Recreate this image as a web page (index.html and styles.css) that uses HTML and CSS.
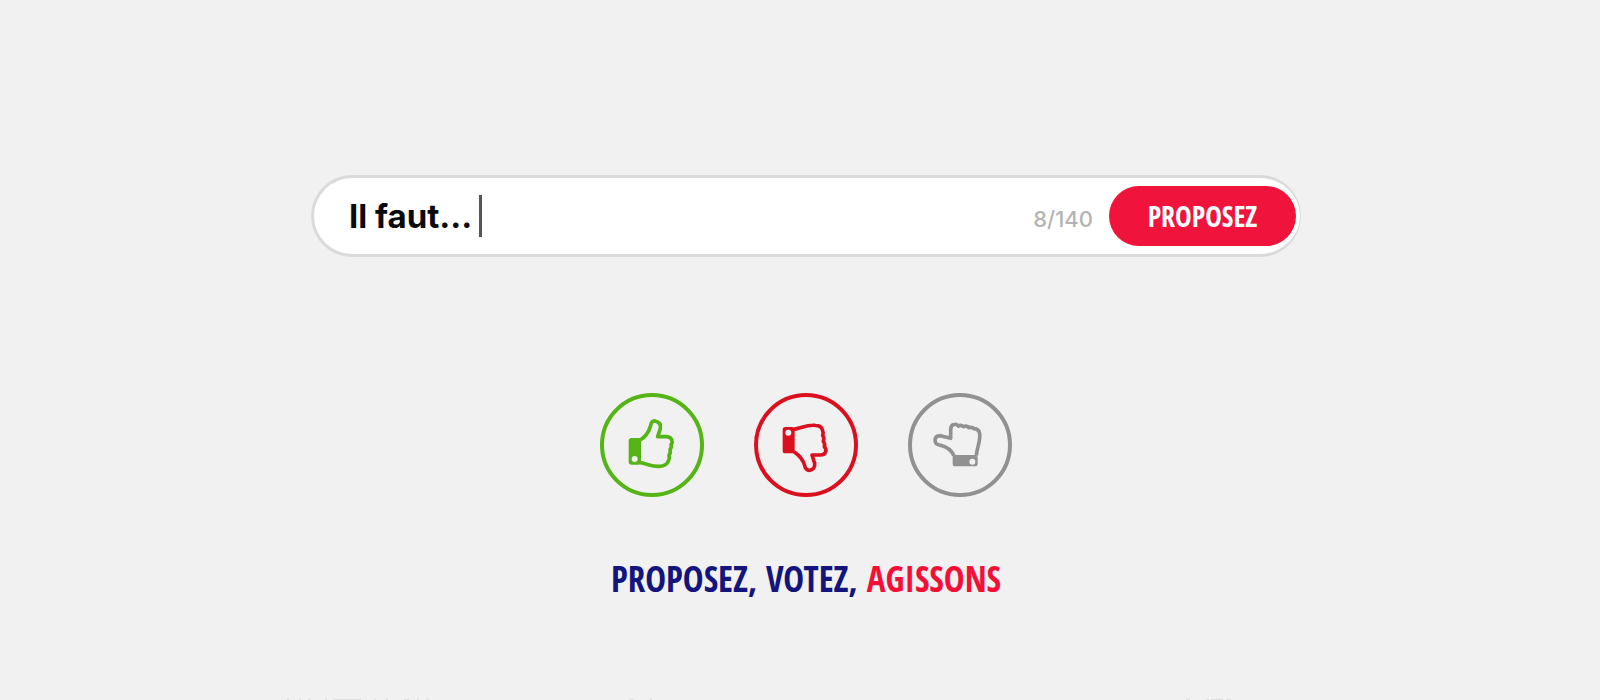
FILE: index.html
```html
<!DOCTYPE html>
<html lang="fr">
<head>
<meta charset="utf-8">
<meta name="viewport" content="width=device-width, initial-scale=1">
<title>Proposez, votez, agissons</title>
<link rel="stylesheet" href="styles.css">
</head>
<body>
<main class="page">
  <form class="proposal">
    <div class="entry">
      <input class="entry-text" type="text" value="Il faut..." maxlength="140" aria-label="Votre proposition">
      <span class="caret"></span>
    </div>
    <span class="counter">8/140</span>
    <button class="submit" type="button">PROPOSEZ</button>
  </form>

  <div class="votes">
    <button class="vote agree" type="button" aria-label="D'accord">
      <svg viewBox="33 25 312 312" aria-hidden="true">
        <path class="line" d="M154 166C169 157 179 142 184 126C186 112 191 108 198 109C212 112 216 121 214 132L206 156H234Q247 158 249 168Q251 175 246 179Q249 187 243 195Q246 205 240 211Q243 224 236 233Q231 244 212 245C190 247 174 237 154 234"/>
        <path class="cuff" fill-rule="evenodd" d="M128 160H150Q156 160 156 166V232Q156 240 149 240H128Q119 240 119 232V168Q119 160 128 160ZM137 214A9 9 0 1 0 137 232A9 9 0 1 0 137 214Z"/>
      </svg>
    </button>
    <button class="vote disagree" type="button" aria-label="Pas d'accord">
      <svg viewBox="29 25 312 312" aria-hidden="true">
        <path class="line" d="M149 134C171 130 188 120 213 122Q232 122 235 138Q238 145 235 152Q241 160 237 170Q243 178 240 186Q248 195 243 203Q240 211 228 211H203L211 236C213 248 206 256 195 257Q184 257 181 243C177 225 165 212 149 201"/>
        <path class="cuff" fill-rule="evenodd" d="M123 127H144Q151 127 151 134V199Q151 206 144 206H123Q115 206 115 198V135Q115 127 123 127ZM132 135A9 9 0 1 0 132 153A9 9 0 1 0 132 135Z"/>
      </svg>
    </button>
    <button class="vote neutral" type="button" aria-label="Vote blanc">
      <svg viewBox="27 25 312 312" aria-hidden="true">
        <path class="line" d="M165 213C157 196 145 187 125 182Q107 179 108 166Q109 153 124 153L155 161V133Q156 120 167 119Q174 118 178 124Q186 120 194 126Q203 122 210 129Q219 126 225 132Q240 133 242 147C245 171 233 190 232 213"/>
        <path class="cuff" fill-rule="evenodd" d="M167 211H229Q236 211 236 218V237Q236 245 228 245H168Q161 245 161 237V218Q161 211 167 211ZM220 222A9 9 0 1 0 220 240A9 9 0 1 0 220 222Z"/>
      </svg>
    </button>
  </div>

  <p class="tagline">PROPOSEZ, VOTEZ, <span class="accent">AGISSONS</span></p>

  <svg class="edge" viewBox="0 0 944 1" aria-hidden="true">
    <path d="M0 0h2v1h-2zM12 0h2v1h-2zM21 0h3v1h-3zM38 0h2v1h-2zM46 0h28v1h-28zM87 0h2v1h-2zM99 0h2v1h-2zM117 0h5v1h-5zM130 0h2v1h-2zM139 0h3v1h-3zM342 0h5v1h-5zM363 0h2v1h-2zM899 0h4v1h-4zM919 0h3v1h-3zM924 0h12v1h-12zM939 0h5v1h-5z"/>
  </svg>
</main>
</body>
</html>
```
FILE: styles.css
```css
* {
  box-sizing: border-box;
}

body {
  margin: 0;
  background: #f1f1f1;
  font-family: Inter, "Liberation Sans", sans-serif;
}

.page {
  display: flex;
  flex-direction: column;
  align-items: center;
  min-height: 100vh;
  padding: 175px 24px 0 36px;
}

.proposal {
  display: flex;
  align-items: center;
  width: 100%;
  max-width: 990px;
  padding: 8px 2px 8px 35px;
  border: 3px solid #dadada;
  border-right-width: 1px;
  border-radius: 41px;
  background: #fff;
}

.entry {
  display: flex;
  flex: 1;
  align-items: center;
  gap: 7px;
  min-width: 0;
}

.entry-text {
  field-sizing: content;
  min-width: 0;
  padding: 0;
  border: 0;
  outline: 0;
  background: none;
  color: #0a0a0a;
  font: bold 33px/40px Inter, "Liberation Sans", sans-serif;
}

.caret {
  width: 3px;
  height: 42px;
  background: #555;
}

.counter {
  padding: 6px 16px 0 0;
  color: #b4b4b4;
  font-size: 22px;
  font-weight: 500;
  line-height: 28px;
}

.submit {
  width: 187px;
  height: 60px;
  margin-right: 2px;
  padding: 0;
  border: 0;
  border-radius: 30px;
  background: #f0143c;
  color: #fff;
  font: bold 28px/32px "Open Sans Condensed", "Liberation Sans Narrow", "Liberation Sans", sans-serif;
}

.votes {
  display: flex;
  gap: 50px;
  margin-top: 136px;
}

.vote {
  width: 104px;
  height: 104px;
  padding: 0;
  border: 4px solid currentColor;
  border-radius: 50%;
  background: none;
}

.vote svg {
  display: block;
  width: 104px;
  height: 104px;
  margin: -4px;
}

.agree {
  color: #55b416;
}

.disagree {
  color: #dc0f1e;
}

.neutral {
  color: #919191;
}

.line {
  fill: none;
  stroke: currentColor;
  stroke-width: 11;
  stroke-linejoin: round;
}

.cuff {
  fill: currentColor;
}

.tagline {
  margin: 60px 0 0;
  color: #14147d;
  font: bold 35px/44px "Open Sans Condensed", "Liberation Sans Narrow", "Liberation Sans", sans-serif;
}

.accent {
  color: #f50f37;
}

.edge {
  width: 100%;
  max-width: 944px;
  margin-top: auto;
  margin-right: 94px;
  fill: #dedede;
}
```
